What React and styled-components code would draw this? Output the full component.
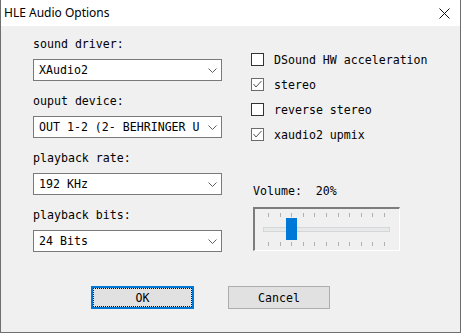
import React from "react";
import styled, { createGlobalStyle } from "styled-components";

const GlobalStyle = createGlobalStyle`
  html, body {
    margin: 0;
    padding: 0;
    background: #f0f0f0;
  }
  * {
    box-sizing: border-box;
  }
`;

const mono = `"DejaVu Sans Mono", "Liberation Mono", monospace`;

const Window = styled.div`
  width: 461px;
  height: 333px;
  display: flex;
  flex-direction: column;
  background: #f0f0f0;
  border: 1px solid #6f6f6f;
  border-top: none;
  font-family: ${mono};
  font-size: 11.6px;
  color: #000;
`;

const TitleBar = styled.div`
  height: 26px;
  flex: none;
  display: flex;
  align-items: center;
  justify-content: space-between;
  padding: 0 10px 0 3px;
  background: #fff;
  font-family: "Noto Sans", "Open Sans", sans-serif;
  font-size: 12px;
`;

const Title = styled.span`
  line-height: 16px;
`;

const CloseIcon = () => (
  <svg width="11" height="11" viewBox="0 0 11 11">
    <path d="M0.5 0.5 L10.5 10.5 M10.5 0.5 L0.5 10.5" stroke="#111" strokeWidth="1" />
  </svg>
);

const Body = styled.div`
  display: grid;
  grid-template-columns: 189px 1fr;
  column-gap: 29px;
  padding: 11px 0 0 32px;
`;

const Column = styled.div`
  display: flex;
  flex-direction: column;
  min-width: 0;
`;

const Field = styled.div`
  display: flex;
  flex-direction: column;
  gap: 8px;
  margin-bottom: ${(p) => (p.$last ? 0 : "13px")};
`;

const Label = styled.div`
  line-height: 14px;
  height: 14px;
  white-space: pre;
`;

const Combo = styled.div`
  height: 22px;
  display: flex;
  align-items: center;
  background: #fff;
  border: 1px solid #7a7a7a;
`;

const ComboText = styled.div`
  flex: 1;
  overflow: hidden;
  white-space: nowrap;
  padding-left: 5px;
  line-height: 14px;
`;

const Chevron = styled.div`
  width: 22px;
  display: flex;
  justify-content: flex-end;
  padding-right: 4px;
`;

const ChevronIcon = () => (
  <svg width="9" height="5" viewBox="0 0 9 5">
    <polyline points="0.5,0.5 4.5,4.5 8.5,0.5" fill="none" stroke="#606060" strokeWidth="1" />
  </svg>
);

const ComboBox = ({ value }) => (
  <Combo>
    <ComboText>{value}</ComboText>
    <Chevron>
      <ChevronIcon />
    </Chevron>
  </Combo>
);

const Checks = styled.div`
  display: flex;
  flex-direction: column;
  gap: 12px;
  margin-top: 16px;
`;

const CheckRow = styled.div`
  display: flex;
  align-items: center;
  gap: 10px;
  height: 13px;
`;

const Box = styled.div`
  width: 13px;
  height: 13px;
  flex: none;
  background: #fff;
  border: 1px solid ${(p) => (p.$checked ? "#6b6b6b" : "#333")};
  display: flex;
  align-items: center;
  justify-content: center;
`;

const CheckText = styled.span`
  line-height: 14px;
  white-space: nowrap;
`;

const Checkbox = ({ label, checked }) => (
  <CheckRow>
    <Box $checked={checked}>
      {checked && (
        <svg width="11" height="11" viewBox="0 0 11 11">
          <polyline points="1.5,5 4,8 9.5,2" fill="none" stroke="#555" strokeWidth="1" />
        </svg>
      )}
    </Box>
    <CheckText>{label}</CheckText>
  </CheckRow>
);

const Volume = styled.div`
  margin: 43px 0 0 2px;
  display: flex;
  flex-direction: column;
  gap: 9px;
`;

const SliderFrame = styled.div`
  width: 147px;
  height: 44px;
  border-top: 2px solid #7d7d7d;
  border-left: 2px solid #7d7d7d;
  border-right: 1px solid #fff;
  border-bottom: 1px solid #fff;
  display: flex;
  flex-direction: column;
  padding-top: 4px;
  gap: 10px;
`;

const Ticks = styled.div`
  display: flex;
  justify-content: space-between;
  width: 117px;
  margin-left: 13px;
  height: 4px;
`;

const Tick = styled.div`
  width: 1px;
  height: 4px;
  background: #b0b0b0;
`;

const Rail = styled.div`
  position: relative;
  width: 127px;
  height: 5px;
  margin-left: 8px;
  background: #e7eaea;
  border: 1px solid #d6d6d6;
`;

const Thumb = styled.div`
  position: absolute;
  top: -10px;
  width: 11px;
  height: 22px;
  background: #0078d7;
`;

const tickRow = () => (
  <Ticks>
    {Array.from({ length: 11 }, (_, i) => (
      <Tick key={i} />
    ))}
  </Ticks>
);

const Slider = ({ value }) => (
  <SliderFrame>
    {tickRow()}
    <Rail>
      <Thumb style={{ left: 5 + (value / 100) * 116 - 6 }} />
    </Rail>
    {tickRow()}
  </SliderFrame>
);

const Footer = styled.div`
  display: flex;
  gap: 34px;
  padding: 34px 0 0 90px;
`;

const Button = styled.button`
  position: relative;
  width: ${(p) => p.$width}px;
  height: 23px;
  padding: 0;
  background: #e1e1e1;
  border: ${(p) => (p.$default ? "2px solid #0078d7" : "1px solid #adadad")};
  font-family: ${mono};
  font-size: 11.6px;
  color: #000;
  &::after {
    content: "";
    display: ${(p) => (p.$default ? "block" : "none")};
    position: absolute;
    inset: 0;
    border: 1px dotted #111;
  }
`;

export default function App() {
  return (
    <>
      <GlobalStyle />
      <Window>
        <TitleBar>
          <Title>HLE Audio Options</Title>
          <CloseIcon />
        </TitleBar>
        <Body>
          <Column>
            <Field>
              <Label>sound driver:</Label>
              <ComboBox value="XAudio2" />
            </Field>
            <Field>
              <Label>ouput device:</Label>
              <ComboBox value="OUT 1-2 (2- BEHRINGER UMC 202HD 192k)" />
            </Field>
            <Field>
              <Label>playback rate:</Label>
              <ComboBox value="192 KHz" />
            </Field>
            <Field $last>
              <Label>playback bits:</Label>
              <ComboBox value="24 Bits" />
            </Field>
          </Column>
          <Column>
            <Checks>
              <Checkbox label="DSound HW acceleration" />
              <Checkbox label="stereo" checked />
              <Checkbox label="reverse stereo" />
              <Checkbox label="xaudio2 upmix" checked />
            </Checks>
            <Volume>
              <Label>{"Volume:  20%"}</Label>
              <Slider value={20} />
            </Volume>
          </Column>
        </Body>
        <Footer>
          <Button $default $width={103}>OK</Button>
          <Button $width={102}>Cancel</Button>
        </Footer>
      </Window>
    </>
  );
}
